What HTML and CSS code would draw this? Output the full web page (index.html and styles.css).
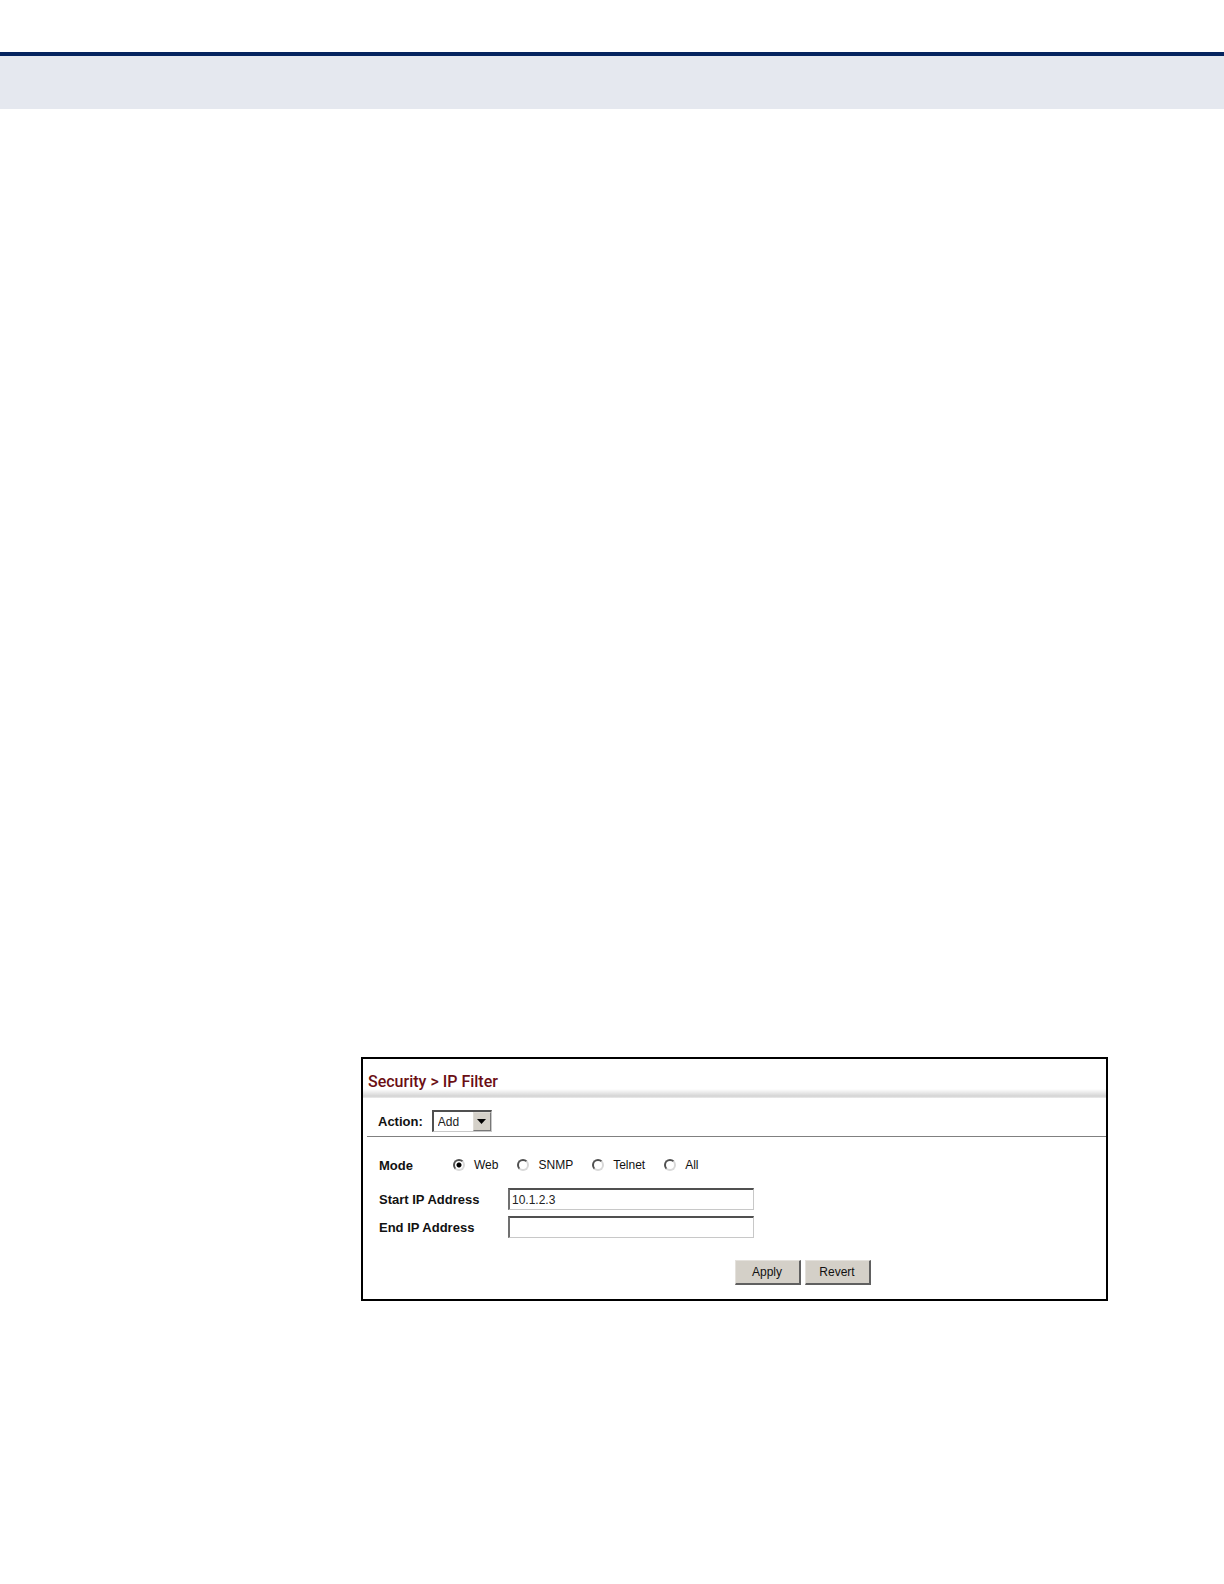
FILE: index.html
```html
<!DOCTYPE html>
<html lang="en">
<head>
    <meta charset="UTF-8">
    <meta name="viewport" content="width=device-width, initial-scale=1.0">
    <title>Security &gt; IP Filter</title>
    <link rel="stylesheet" href="styles.css">
</head>
<body>
    <header class="page-header"></header>
    <main class="page">
        <form class="panel">
            <h1 class="panel-title">Security &gt; IP Filter</h1>
            <div class="action-row">
                <label for="action">Action:</label>
                <div class="select-box">
                    <select id="action">
                        <option>Add</option>
                    </select>
                    <span class="select-arrow">
                        <svg width="9" height="5" viewBox="0 0 18 10"><path d="M0 0h18L9 10z"/></svg>
                    </span>
                </div>
            </div>
            <div class="fields">
                <div class="mode-row" role="radiogroup" aria-labelledby="mode">
                    <span class="field-label" id="mode">Mode</span>
                    <label class="mode"><input type="radio" name="mode" checked>Web</label>
                    <label class="mode"><input type="radio" name="mode">SNMP</label>
                    <label class="mode"><input type="radio" name="mode">Telnet</label>
                    <label class="mode"><input type="radio" name="mode">All</label>
                </div>
                <div class="address-row">
                    <label class="field-label" for="startIp">Start IP Address</label>
                    <input type="text" id="startIp" value="10.1.2.3">
                </div>
                <div class="address-row">
                    <label class="field-label" for="endIp">End IP Address</label>
                    <input type="text" id="endIp">
                </div>
            </div>
            <div class="buttons">
                <button type="button">Apply</button>
                <button type="reset">Revert</button>
            </div>
        </form>
    </main>
</body>
</html>
```
FILE: styles.css
```css
* {
    box-sizing: border-box;
}

body {
    margin: 0;
    background-color: white;
    color: #111;
    font-family: "Liberation Sans", Arial, sans-serif;
    font-size: 12px;
}

.page-header {
    margin-top: 52px;
    height: 57px;
    border-top: 4px solid #05245f;
    background-color: #e5e8ef;
}

.page {
    padding: 948px 116px 280px 361px;
}

.panel {
    border: 2px solid black;
    padding-bottom: 14px;
}

.panel-title {
    margin: 0;
    padding: 13px 5px 6px;
    font-family: Roboto, sans-serif;
    font-size: 16px;
    font-weight: 500;
    line-height: 20px;
    color: #6b0f14;
    background: linear-gradient(white, #d4d4d4 80%, #ececec) bottom / 100% 9px no-repeat;
}

/* action bar */
.action-row {
    display: flex;
    align-items: center;
    gap: 9px;
    margin-left: 4px;
    padding: 12px 11px 4px;
    border-bottom: 1px solid #808080;
    font-size: 13px;
    font-weight: bold;
}

.select-box {
    position: relative;
    width: 60px;
    height: 22px;
}

.select-box select {
    appearance: none;
    width: 100%;
    height: 100%;
    padding: 0 20px 0 4px;
    border: 1px solid #c8c8c8;
    border-top: 2px solid #505050;
    border-left: 2px solid #505050;
    border-radius: 0;
    background-color: white;
    color: #222;
    font-family: inherit;
    font-size: 12px;
}

/* raised button at the right end of the drop-down */
.select-arrow {
    position: absolute;
    top: 2px;
    right: 1px;
    bottom: 1px;
    width: 18px;
    display: flex;
    align-items: center;
    justify-content: center;
    border: 1px solid #dedbd5;
    border-right-color: #777;
    border-bottom-color: #777;
    background-color: #d4d0c8;
    pointer-events: none;
}

/* fields */
.fields {
    padding: 18px 16px 0;
}

.field-label {
    width: 129px;
    font-size: 13px;
    font-weight: bold;
}

.mode-row {
    display: flex;
    align-items: center;
    gap: 19px;
    height: 20px;
    margin-bottom: 13px;
}

.mode-row .field-label {
    width: 55px;
}

.mode {
    display: flex;
    align-items: center;
    gap: 9px;
}

.mode input {
    appearance: none;
    width: 12px;
    height: 12px;
    margin: 0;
    border: 2px solid;
    border-color: #505050 #d8d8d8 #d8d8d8 #505050;
    border-radius: 50%;
}

.mode input:checked {
    background: radial-gradient(circle, black 2px, transparent 3px);
}

.address-row {
    display: flex;
    align-items: center;
    margin-bottom: 6px;
}

.address-row input {
    width: 246px;
    height: 22px;
    padding: 0 2px;
    border: 1px solid #c8c8c8;
    border-top: 2px solid #505050;
    border-left: 2px solid #707070;
    font-family: inherit;
    font-size: 12px;
    color: #222;
}

/* buttons */
.buttons {
    display: flex;
    gap: 4px;
    margin: 22px 0 0 50%;
}

.buttons button {
    width: 66px;
    height: 25px;
    padding: 0;
    border: 1px solid #e4e1dc;
    border-right: 2px solid #606060;
    border-bottom: 2px solid #606060;
    background-color: #d4d0c8;
    color: #111;
    font-family: inherit;
    font-size: 12px;
}
```
